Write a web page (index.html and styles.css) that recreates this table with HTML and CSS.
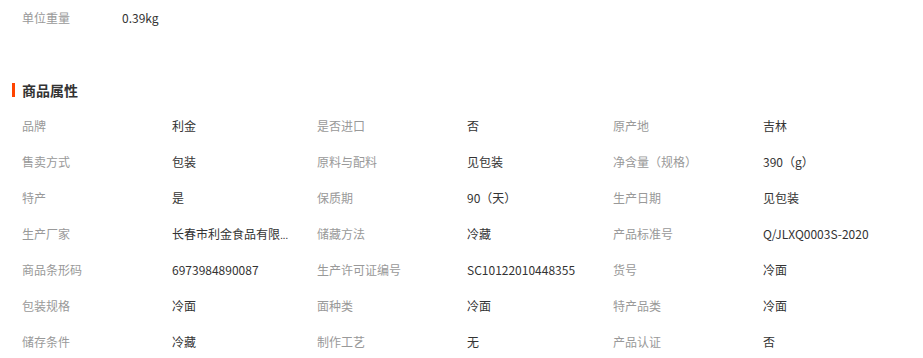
FILE: index.html
```html
<!DOCTYPE html>
<html lang="zh-CN">
<head>
<meta charset="utf-8">
<link rel="stylesheet" href="styles.css">
</head>
<body>
<div class="page">
  <div class="top-row">
    <span class="top-label">单位重量</span>
    <span class="top-value">0.39kg</span>
  </div>
  <h2 class="section-title">商品属性</h2>
  <div class="attr-grid">
    <span class="label">品牌</span><span class="value">利金</span>
    <span class="label">是否进口</span><span class="value">否</span>
    <span class="label">原产地</span><span class="value">吉林</span>

    <span class="label">售卖方式</span><span class="value">包装</span>
    <span class="label">原料与配料</span><span class="value">见包装</span>
    <span class="label">净含量（规格）</span><span class="value">390（g）</span>

    <span class="label">特产</span><span class="value">是</span>
    <span class="label">保质期</span><span class="value">90（天）</span>
    <span class="label">生产日期</span><span class="value">见包装</span>

    <span class="label">生产厂家</span><span class="value" title="长春市利金食品有限公司">长春市利金食品有限<span class="dots">...</span></span>
    <span class="label">储藏方法</span><span class="value">冷藏</span>
    <span class="label">产品标准号</span><span class="value">Q/JLXQ0003S-2020</span>

    <span class="label">商品条形码</span><span class="value">6973984890087</span>
    <span class="label">生产许可证编号</span><span class="value">SC10122010448355</span>
    <span class="label">货号</span><span class="value">冷面</span>

    <span class="label">包装规格</span><span class="value">冷面</span>
    <span class="label">面种类</span><span class="value">冷面</span>
    <span class="label">特产品类</span><span class="value">冷面</span>

    <span class="label">储存条件</span><span class="value">冷藏</span>
    <span class="label">制作工艺</span><span class="value">无</span>
    <span class="label">产品认证</span><span class="value">否</span>
  </div>
</div>
</body>
</html>
```
FILE: styles.css
```css
html, body {
  margin: 0;
  padding: 0;
  background: #fff;
}
body {
  font-family: "Noto Sans CJK SC", "Microsoft YaHei", sans-serif;
  font-size: 12px;
  color: #333;
}
.top-row {
  display: flex;
  height: 36px;
  line-height: 36px;
  padding-left: 22px;
}
.top-label {
  width: 100px;
  color: #999;
}
.top-value {
  color: #333;
}
.section-title {
  margin: 37px 0 0 12px;
  padding-left: 7px;
  border-left: 3px solid #ff4400;
  height: 14px;
  line-height: 14px;
  font-size: 14px;
  font-weight: bold;
  color: #333;
  position: relative;
  top: 10px;
}
.attr-grid {
  margin-top: 20px;
  display: grid;
  grid-template-columns: 150px 145px 150px 146px 150px 1fr;
  grid-auto-rows: 36px;
  align-items: center;
  padding-left: 22px;
}
.label {
  color: #999;
}
.value {
  color: #333;
  white-space: nowrap;
}
.dots {
  font-family: "Liberation Sans", sans-serif;
  font-size: 11px;
  letter-spacing: -0.5px;
}
```
